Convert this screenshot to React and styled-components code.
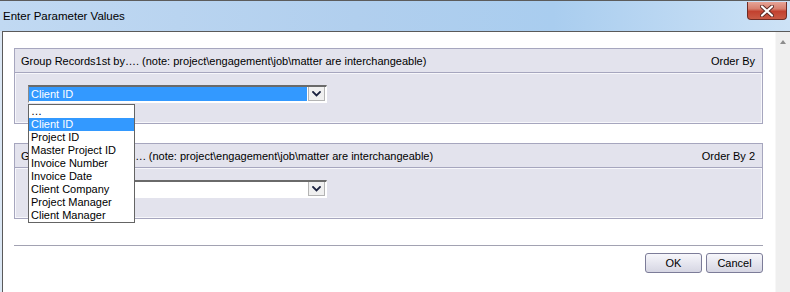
import styled, { createGlobalStyle } from "styled-components";

const GlobalStyle = createGlobalStyle`
  html, body {
    margin: 0;
    padding: 0;
    overflow: hidden;
  }
  body {
    font-family: "Liberation Sans", Arial, sans-serif;
    font-size: 11px;
    color: #000;
  }
`;

const OPTIONS = [
  "…",
  "Client ID",
  "Project ID",
  "Master Project ID",
  "Invoice Number",
  "Invoice Date",
  "Client Company",
  "Project Manager",
  "Client Manager",
];

const GROUPS = [
  {
    title:
      "Group Records1st by…. (note: project\\engagement\\job\\matter are interchangeable)",
    order: "Order By",
    value: "Client ID",
    open: true,
  },
  {
    title:
      "Group Records 2nd by…. (note: project\\engagement\\job\\matter are interchangeable)",
    order: "Order By 2",
    value: "",
    open: false,
  },
];

const Chevron = () => (
  <svg width="9" height="6" viewBox="0 0 9 6">
    <path
      d="M1 1 L4.5 4.5 L8 1"
      fill="none"
      stroke="#1c2340"
      strokeWidth="1.8"
      strokeLinecap="square"
    />
  </svg>
);

const CloseGlyph = () => (
  <svg width="14" height="12" viewBox="0 0 14 12">
    <path
      d="M2 1.5 L12 10.5 M12 1.5 L2 10.5"
      stroke="#5a2a24"
      strokeWidth="4"
      strokeLinecap="round"
    />
    <path
      d="M2 1.5 L12 10.5 M12 1.5 L2 10.5"
      stroke="#ffffff"
      strokeWidth="2.2"
      strokeLinecap="round"
    />
  </svg>
);

const ComboBox = ({ value, open }) => (
  <ComboWrap>
    <Combo>
      <ComboValue $selected={!!value}>{value}</ComboValue>
      <DropButton>
        <Chevron />
      </DropButton>
    </Combo>
    {open && (
      <DropList>
        {OPTIONS.map((option) => (
          <DropItem key={option} $active={option === value}>
            {option}
          </DropItem>
        ))}
      </DropList>
    )}
  </ComboWrap>
);

export default function App() {
  return (
    <>
      <GlobalStyle />
      <Window>
        <TitleBar>
          <Title>Enter Parameter Values</Title>
          <CloseButton>
            <CloseGlyph />
          </CloseButton>
        </TitleBar>
        <ClientRow>
          <Content>
            {GROUPS.map((group, i) => (
              <GroupBox key={group.order} $first={i === 0}>
                <GroupHeader>
                  <span>{group.title}</span>
                  <span>{group.order}</span>
                </GroupHeader>
                <GroupBody>
                  <ComboBox value={group.value} open={group.open} />
                </GroupBody>
              </GroupBox>
            ))}
            <Divider />
            <ButtonRow>
              <DialogButton>OK</DialogButton>
              <DialogButton>Cancel</DialogButton>
            </ButtonRow>
          </Content>
          <ScrollBar>
            <ScrollArrow />
          </ScrollBar>
        </ClientRow>
      </Window>
    </>
  );
}

const Window = styled.div`
  width: 790px;
  height: 292px;
  display: flex;
  flex-direction: column;
  background: #dbe7f4;
  overflow: hidden;
`;

const TitleBar = styled.div`
  height: 30px;
  border-top: 1px solid #5c5c5c;
  display: flex;
  justify-content: space-between;
  align-items: flex-start;
  padding: 0 3px 0 3px;
  background: linear-gradient(
    to right,
    #c1d9f2 0%,
    #b1cfee 45%,
    #a9cdef 70%,
    #cde2f6 100%
  );
`;

const Title = styled.div`
  font-family: "Liberation Sans", Arial, sans-serif;
  font-size: 11.5px;
  line-height: 30px;
  color: #000;
`;

const CloseButton = styled.div`
  width: 38px;
  height: 17px;
  margin-top: 1px;
  display: flex;
  align-items: center;
  justify-content: center;
  border: 1px solid #6e2c25;
  border-top: none;
  border-radius: 0 0 4px 4px;
  background: linear-gradient(
    to bottom,
    #e6a496 0%,
    #d7806f 40%,
    #c2412f 55%,
    #c95a45 100%
  );
`;

const ClientRow = styled.div`
  flex: 1;
  display: flex;
  margin-left: 2px;
  border-top: 1px solid #5a5a5a;
  border-left: 1px solid #5a5a5a;
  background: #fff;
`;

const Content = styled.div`
  flex: 1;
  display: flex;
  flex-direction: column;
  padding: 16px 12px 0 11px;
`;

const GroupBox = styled.div`
  margin-top: ${(p) => (p.$first ? 0 : 19)}px;
  border: 1px solid #a6a6be;
  background: #e3e3ed;
`;

const GroupHeader = styled.div`
  height: 23px;
  display: flex;
  align-items: center;
  justify-content: space-between;
  padding: 0 7px 0 6px;
  border-bottom: 1px solid #a6a6be;
  white-space: nowrap;
`;

const GroupBody = styled.div`
  height: 38px;
  padding: 12px 0 0 13px;
  box-shadow: inset 1px 1px 0 #f7f7fb, inset -1px -1px 0 #f7f7fb;
`;

const ComboWrap = styled.div`
  position: relative;
  width: 299px;
`;

const Combo = styled.div`
  height: 15px;
  display: flex;
  border-top: 2px solid #6a6a6a;
  border-left: 1px solid #8a8a8a;
  border-bottom: 1px solid #ffffff;
  border-right: 1px solid #ffffff;
  background: #fff;
`;

const ComboValue = styled.div`
  flex: 1;
  margin: 0 1px 1px 0;
  padding-left: 2px;
  line-height: 14px;
  color: #fff;
  background: ${(p) => (p.$selected ? "#3399ff" : "#ffffff")};
`;

const DropButton = styled.div`
  width: 17px;
  height: 14px;
  margin-right: 1px;
  display: flex;
  align-items: center;
  justify-content: center;
  border: 1px solid #b4b4b4;
  border-top: none;
  background: #f0f0f0;
  box-sizing: border-box;
`;

const DropList = styled.div`
  position: absolute;
  left: 0;
  top: 19px;
  width: 105px;
  border: 1px solid #646464;
  background: #fff;
  z-index: 5;
`;

const DropItem = styled.div`
  height: 13px;
  line-height: 13px;
  padding-left: 2px;
  white-space: nowrap;
  color: ${(p) => (p.$active ? "#fff" : "#000")};
  background: ${(p) => (p.$active ? "#3399ff" : "transparent")};
`;

const Divider = styled.div`
  margin-top: 26px;
  height: 1px;
  background: #a2a2b2;
`;

const ButtonRow = styled.div`
  margin-top: 7px;
  display: flex;
  justify-content: flex-end;
  gap: 4px;
`;

const DialogButton = styled.div`
  width: 55px;
  height: 18px;
  display: flex;
  align-items: center;
  justify-content: center;
  border: 1px solid #7c7c98;
  border-radius: 3px;
  background: linear-gradient(to bottom, #f7f7fb 0%, #e6e6ef 50%, #d6d6e3 100%);
`;

const ScrollBar = styled.div`
  width: 14px;
  display: flex;
  justify-content: center;
  padding-top: 8px;
  background: #efefef;
  border-left: 1px solid #f7f7f7;
`;

const ScrollArrow = styled.div`
  width: 0;
  height: 0;
  border-left: 3px solid transparent;
  border-right: 3px solid transparent;
  border-bottom: 4px solid #8c8c8c;
`;
